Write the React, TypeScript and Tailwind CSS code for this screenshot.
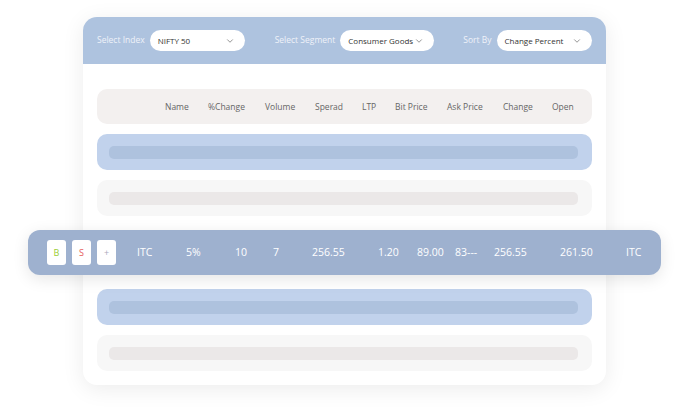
import { ChevronDown } from "lucide-react";

const font = { fontFamily: '"Open Sans", "Liberation Sans", sans-serif' };

function Select({ label, value, width }: { label: string; value: string; width: string }) {
  return (
    <div className="flex shrink-0 items-center gap-[5px] whitespace-nowrap">
      <span className="text-[8.5px] text-[#eef2f9]">{label}</span>
      <div className={`flex h-[21px] shrink-0 items-center justify-between rounded-full bg-white pl-[8px] pr-[10px] ${width}`}>
        <span className="text-[8px] text-[#333]">{value}</span>
        <ChevronDown size={10} strokeWidth={1.5} className="text-[#555]" />
      </div>
    </div>
  );
}

const heads: [string, string][] = [
  ["Name", "w-[43px]"],
  ["%Change", "w-[57px]"],
  ["Volume", "w-[50px]"],
  ["Sperad", "w-[47px]"],
  ["LTP", "w-[33px]"],
  ["Bit Price", "w-[52px]"],
  ["Ask Price", "w-[56px]"],
  ["Change", "w-[49px]"],
  ["Open", ""],
];

const vals: [string, string][] = [
  ["ITC", "w-[49px]"],
  ["5%", "w-[49px]"],
  ["10", "w-[38px]"],
  ["7", "w-[39px]"],
  ["256.55", "w-[66px]"],
  ["1.20", "w-[39px]"],
  ["89.00", "w-[38px]"],
  ["83---", "w-[39px]"],
  ["256.55", "w-[66px]"],
  ["261.50", "w-[66px]"],
  ["ITC", ""],
];

function Placeholder({ blue }: { blue?: boolean }) {
  return (
    <div className={`flex h-[36px] items-center rounded-[10px] pl-[12px] pr-[14px] ${blue ? "bg-[#c1d2ec]" : "bg-[#f7f7f7]"}`}>
      <div className={`h-[13px] w-full rounded-[5px] ${blue ? "bg-[#aec2de]" : "bg-[#ebe8e8]"}`} />
    </div>
  );
}

export default function App() {
  return (
    <div className="h-[410px] w-[689px] bg-white pt-[17px]" style={font}>
      <div className="ml-[83px] w-[523px] rounded-[14px] bg-white shadow-[0_4px_22px_rgba(0,0,0,0.08)]">
        {/* Filters */}
        <div className="flex h-[47px] items-center rounded-t-[14px] bg-[#aec3df] pl-[14px]">
          <Select label="Select Index" value="NIFTY 50" width="w-[95px]" />
          <div className="ml-[30px]">
            <Select label="Select Segment" value="Consumer Goods" width="w-[94px]" />
          </div>
          <div className="ml-[29px]">
            <Select label="Sort By" value="Change Percent" width="w-[95px]" />
          </div>
        </div>

        <div className="flex flex-col gap-[10px] px-[14px] pb-[14px] pt-[25px]">
          <div className="flex h-[35px] items-center rounded-[10px] bg-[#f3f0ef] pl-[68px] pt-[2px] text-[8.5px] text-[#666]">
            {heads.map(([h, w]) => (
              <span key={h} className={w}>{h}</span>
            ))}
          </div>
          <Placeholder blue />
          <Placeholder />

          {/* Highlighted live row, wider than the card */}
          <div className="relative z-10 -mx-[69px] my-[4px] flex h-[45px] items-center rounded-[12px] bg-[#9eb1cf] pl-[19px] text-[10.5px] text-white shadow-[0_4px_16px_rgba(0,0,0,0.10)]">
            <div className="flex gap-[6px]">
              <div className="flex h-[25px] w-[19px] items-center justify-center rounded-[3px] bg-white text-[9px] text-[#9acd32]">B</div>
              <div className="flex h-[25px] w-[19px] items-center justify-center rounded-[3px] bg-white text-[9px] text-[#e55b5b]">S</div>
              <div className="flex h-[25px] w-[19px] items-center justify-center rounded-[3px] bg-white text-[9px] text-[#aab]">+</div>
            </div>
            <div className="ml-[21px] flex pt-[1px]">
              {vals.map(([v, w], i) => (
                <span key={i} className={w}>{v}</span>
              ))}
            </div>
          </div>

          <Placeholder blue />
          <Placeholder />
        </div>
      </div>
    </div>
  );
}
